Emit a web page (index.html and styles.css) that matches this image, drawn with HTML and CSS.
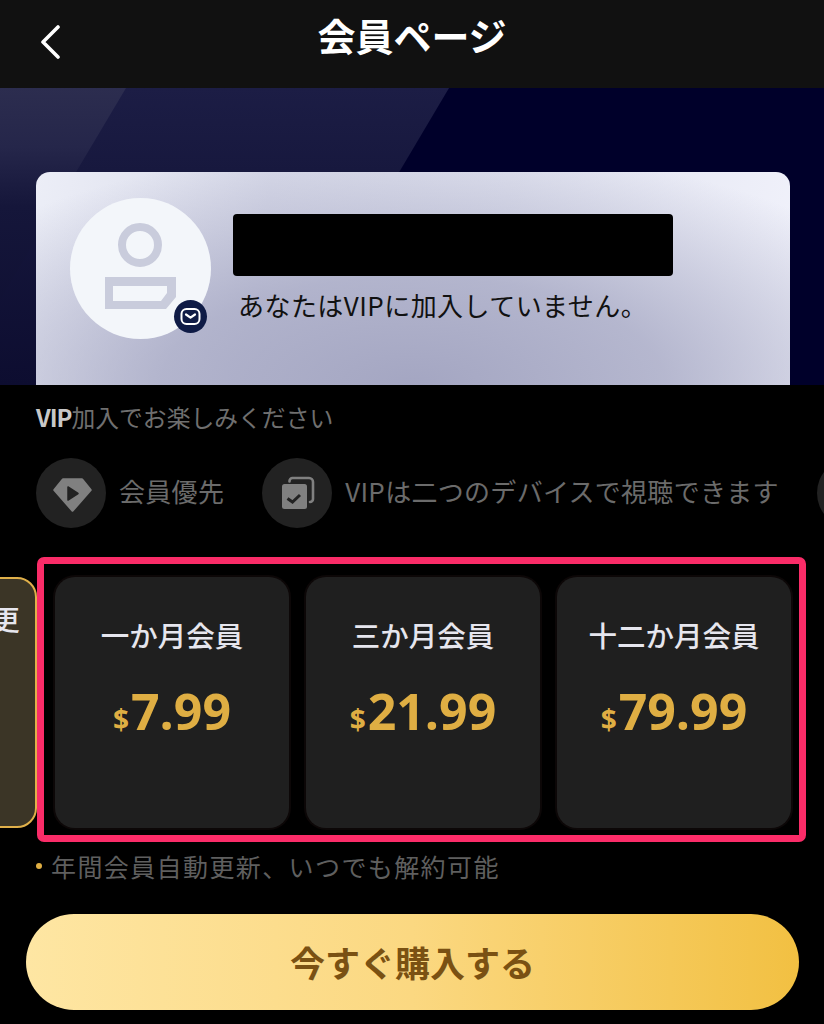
FILE: index.html
```html
<!DOCTYPE html>
<html lang="ja">
<head>
<meta charset="utf-8">
<title>会員ページ</title>
<link rel="stylesheet" href="styles.css">
</head>
<body>
<div class="page">
  <header class="topbar">
    <svg class="back" viewBox="0 0 20 34" aria-hidden="true"><path d="M18 2 3 17l15 15" fill="none" stroke="#fff" stroke-width="3.6" stroke-linecap="round" stroke-linejoin="round"/></svg>
    <h1 class="title">会員ページ</h1>
  </header>

  <section class="banner">
    <div class="card">
      <div class="avatar">
        <svg class="avatar-icon" viewBox="0 0 71 86" aria-hidden="true">
          <circle cx="35" cy="22" r="18" fill="none" stroke="#c9ccdc" stroke-width="8"/>
          <path d="M0 54h71v20L61 86H0z M8 63v15h48l6-8V63z" fill="#c9ccdc" fill-rule="evenodd"/>
        </svg>
        <span class="badge">
          <svg viewBox="0 0 21 21" aria-hidden="true"><rect x="1.500" y="3" width="18" height="15" rx="5" fill="none" stroke="#fff" stroke-width="2"/><path d="M6 8.500l4.500 3.200L15 8.500" fill="none" stroke="#fff" stroke-width="2.200" stroke-linecap="round" stroke-linejoin="round"/></svg>
        </span>
      </div>
      <div class="user">
        <div class="redacted"></div>
        <p class="status">あなたはVIPに加入していません。</p>
      </div>
    </div>
  </section>

  <section class="perks">
    <h2 class="perks-title"><b>VIP</b>加入でお楽しみください</h2>
    <div class="perk-row">
      <div class="perk">
        <span class="perk-icon">
          <svg class="gem" viewBox="0 0 40 40" aria-hidden="true"><path d="M10 6.500h19l8.500 10.500-18 20.500-18-20.500z" fill="#808080" stroke="#808080" stroke-width="2.500" stroke-linejoin="round"/><path d="M15 14l10 6.500L15 27z" fill="#222" stroke="#222" stroke-width="1.500" stroke-linejoin="round"/></svg>
        </span>
        <span class="perk-label">会員優先</span>
      </div>
      <div class="perk">
        <span class="perk-icon">
          <svg viewBox="0 0 40 40" aria-hidden="true"><path d="M12.500 8.500V8a3 3 0 0 1 3-3H32a4 4 0 0 1 4 4v17a3 3 0 0 1-3 3" fill="none" stroke="#808080" stroke-width="2.600" stroke-linecap="round"/><rect x="5" y="11" width="25" height="25" rx="2.500" fill="#808080"/><path d="M10.500 25.500l5 3.500 7.500-7" fill="none" stroke="#222" stroke-width="3"/></svg>
        </span>
        <span class="perk-label">VIPは二つのデバイスで視聴できます</span>
      </div>
      <div class="perk">
        <span class="perk-icon"></span>
      </div>
    </div>
  </section>

  <section class="plans">
    <div class="plan plan-active">
      <div class="plan-name">年間会員自動更<br>新</div>
    </div>
    <div class="plan">
      <div class="plan-name">一か月会員</div>
      <div class="price"><span class="cur">$</span>7.99</div>
    </div>
    <div class="plan">
      <div class="plan-name">三か月会員</div>
      <div class="price"><span class="cur">$</span>21.99</div>
    </div>
    <div class="plan">
      <div class="plan-name">十二か月会員</div>
      <div class="price"><span class="cur">$</span>79.99</div>
    </div>
  </section>

  <p class="note">年間会員自動更新、いつでも解約可能</p>

  <button class="buy" type="button">今すぐ購入する</button>
</div>
</body>
</html>
```

FILE: styles.css
```css
*, *::before, *::after { box-sizing: border-box; }
html, body { margin: 0; padding: 0; background: #000; }
body { font-family: "Noto Sans CJK JP", "Noto Sans", sans-serif; }
.page { width: 824px; height: 1024px; overflow: hidden; background: #000; }

.topbar { height: 88px; background: #111; position: relative; display: flex; align-items: center; justify-content: center; }
.back { position: absolute; left: 40px; top: 25px; width: 20px; height: 34px; }
.title { margin: 0 0 18px; font-size: 38px; line-height: 44px; font-weight: 700; color: #fff; }

.banner { height: 297px; padding: 84px 34px 0 36px; background: #00002a; position: relative; overflow: hidden; display: flex; }
.banner::before { content: ""; position: absolute; inset: 0; background: linear-gradient(180deg, #1c1d45 0%, #17183e 28%, #0d0d30 100%); clip-path: polygon(0 0, 449px 0, 273px 297px, 0 297px); }
.banner::after { content: ""; position: absolute; inset: 0; background: linear-gradient(180deg, #2c2d4f 0%, #25264a 20%, #15163a 40%, #0d0d30 100%); clip-path: polygon(0 0, 126px 0, 0 212px); }
.card { position: relative; z-index: 1; flex: 1; display: flex; gap: 22px; padding: 26px 0 0 34px; border-radius: 14px 14px 0 0;
  background:
    radial-gradient(ellipse 560px 240px at 50% 100%, #a4a6c2 0%, rgba(164,166,194,.75) 45%, rgba(200,202,224,0) 100%),
    linear-gradient(100deg, #eceef7 0%, #d8dae9 30%, #e0e2ef 60%, #f1f2fb 100%); }

.avatar { position: relative; width: 141px; height: 141px; border-radius: 50%; background: #f3f6fa; display: flex; align-items: center; justify-content: center; flex: none; }
.avatar-icon { width: 71px; height: 86px; margin-bottom: 5px; }
.badge { position: absolute; right: 4px; bottom: 6px; width: 33px; height: 33px; border-radius: 50%; background: #0f1b46; display: flex; align-items: center; justify-content: center; }
.badge svg { width: 21px; height: 21px; }

.user { padding-top: 16px; flex: none; }
.redacted { width: 440px; height: 62px; background: #000; border-radius: 4px; }
.status { margin: 11px 0 0 5px; font-size: 26px; line-height: 36px; letter-spacing: .45px; color: #111; white-space: nowrap; }

.perks { padding: 17px 0 0 36px; }
.perks-title { margin: 0; font-size: 23.800px; line-height: 30px; font-weight: 400; color: #6f6f6f; white-space: nowrap; }
.perks-title b { color: #c8c8c8; font-weight: 700; letter-spacing: -1px; }
.perk-row { display: flex; gap: 38px; margin-top: 26px; white-space: nowrap; }
.perk { display: flex; align-items: center; gap: 13px; font-size: 26px; letter-spacing: .3px; color: #6b6b6b; height: 70px; }
.perk-label { margin-bottom: 5px; }
.perk-icon { width: 70px; height: 70px; border-radius: 50%; background: #222; display: flex; align-items: center; justify-content: center; flex: none; }
.perk-icon svg { width: 40px; height: 40px; }
.perk-icon .gem { margin-left: 3px; }

.plans { position: relative; display: flex; gap: 17px; margin: 49px 0 0 -197px; height: 251px; }
.plans::after { content: ""; position: absolute; left: 234px; top: -20px; width: 769px; height: 285px; border: 7px solid #fa2c68; border-radius: 7px; pointer-events: none; }
.plan { width: 234px; height: 251px; flex: none; border-radius: 20px; background: #1f1f1f; box-shadow: 0 0 0 2px #0c0707; text-align: center; padding-top: 42px; color: #e6e6ee; }
.plan-active { margin-right: 1px; background: #3b3526; border: 2px solid #e0b04a; box-shadow: none; padding-top: 24px; }
.plan-name { font-size: 28.500px; line-height: 32px; font-weight: 500; white-space: nowrap; }
.price { margin-top: 30px; font-family: "Open Sans", "Noto Sans", sans-serif; font-weight: 700; font-size: 50px; line-height: 60px; color: #dfae43; }
.cur { font-size: 28px; margin-right: 2px; }

.note { margin: 20px 0 0 36px; padding-left: 15px; font-size: 25px; line-height: 36px; color: #5f5f5f; position: relative; white-space: nowrap; letter-spacing: 1.400px; }
.note::before { content: ""; position: absolute; left: 0; top: 15px; width: 6px; height: 6px; border-radius: 50%; background: #dfae43; }

.buy { display: block; width: 773px; height: 96px; margin: 30px 0 0 26px; padding: 0 0 2px; border: 0; border-radius: 48px; background: linear-gradient(90deg, #fee6a3 0%, #fbd881 50%, #f2c042 100%); color: #7a5113; font: 700 35px/1 "Noto Sans CJK JP", "Noto Sans", sans-serif; }
```
